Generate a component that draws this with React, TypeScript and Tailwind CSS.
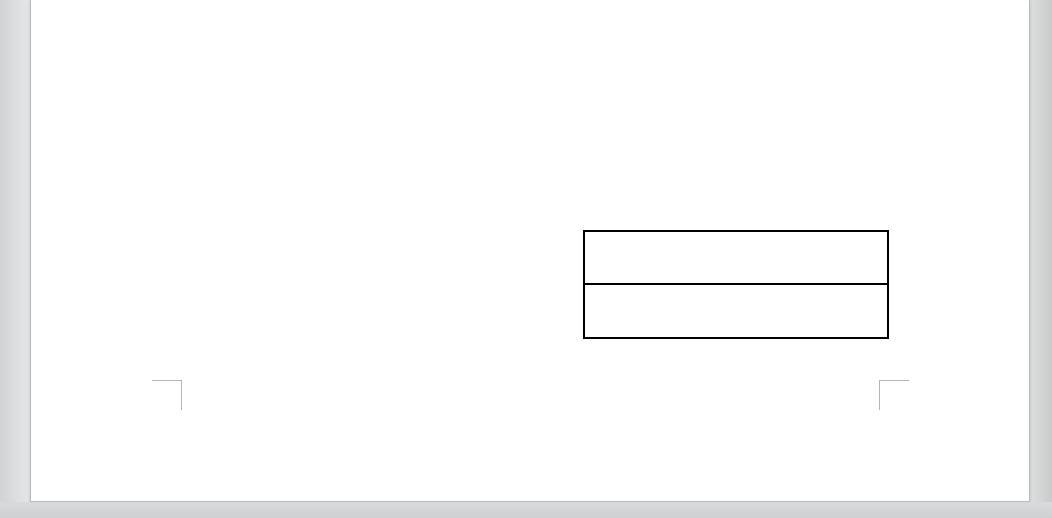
export default function App() {
  return (
    <div className="flex h-[518px] w-[1052px] flex-col overflow-hidden">
      <div className="flex bg-[linear-gradient(to_right,#d2d3d4_0%,#e6e7e8_3%,#e6e7e8_97%,#c9caca_100%)]">
        <div className="ml-[30px] h-[502px] w-[1000px] border-x border-b border-[#b9b9b9] bg-white shadow-[0_1px_3px_rgba(0,0,0,0.15)]">
          <div className="flex flex-col pt-[230px]">
            {/* table box */}
            <div className="ml-[552px] w-[306px] border-2 border-black">
              <div className="h-[53px] border-b-2 border-black" />
              <div className="h-[52px]" />
            </div>

            {/* crop marks */}
            <div className="mt-[41px] flex">
              <div className="ml-[121px] h-[30px] w-[30px] border-r border-t border-[#b4b4b4]" />
              <div className="ml-[697px] h-[30px] w-[30px] border-l border-t border-[#b4b4b4]" />
            </div>
          </div>
        </div>
      </div>
      <div className="flex-1 bg-[linear-gradient(to_bottom,#d9dadb,#cfd0d1)]" />
    </div>
  );
}
